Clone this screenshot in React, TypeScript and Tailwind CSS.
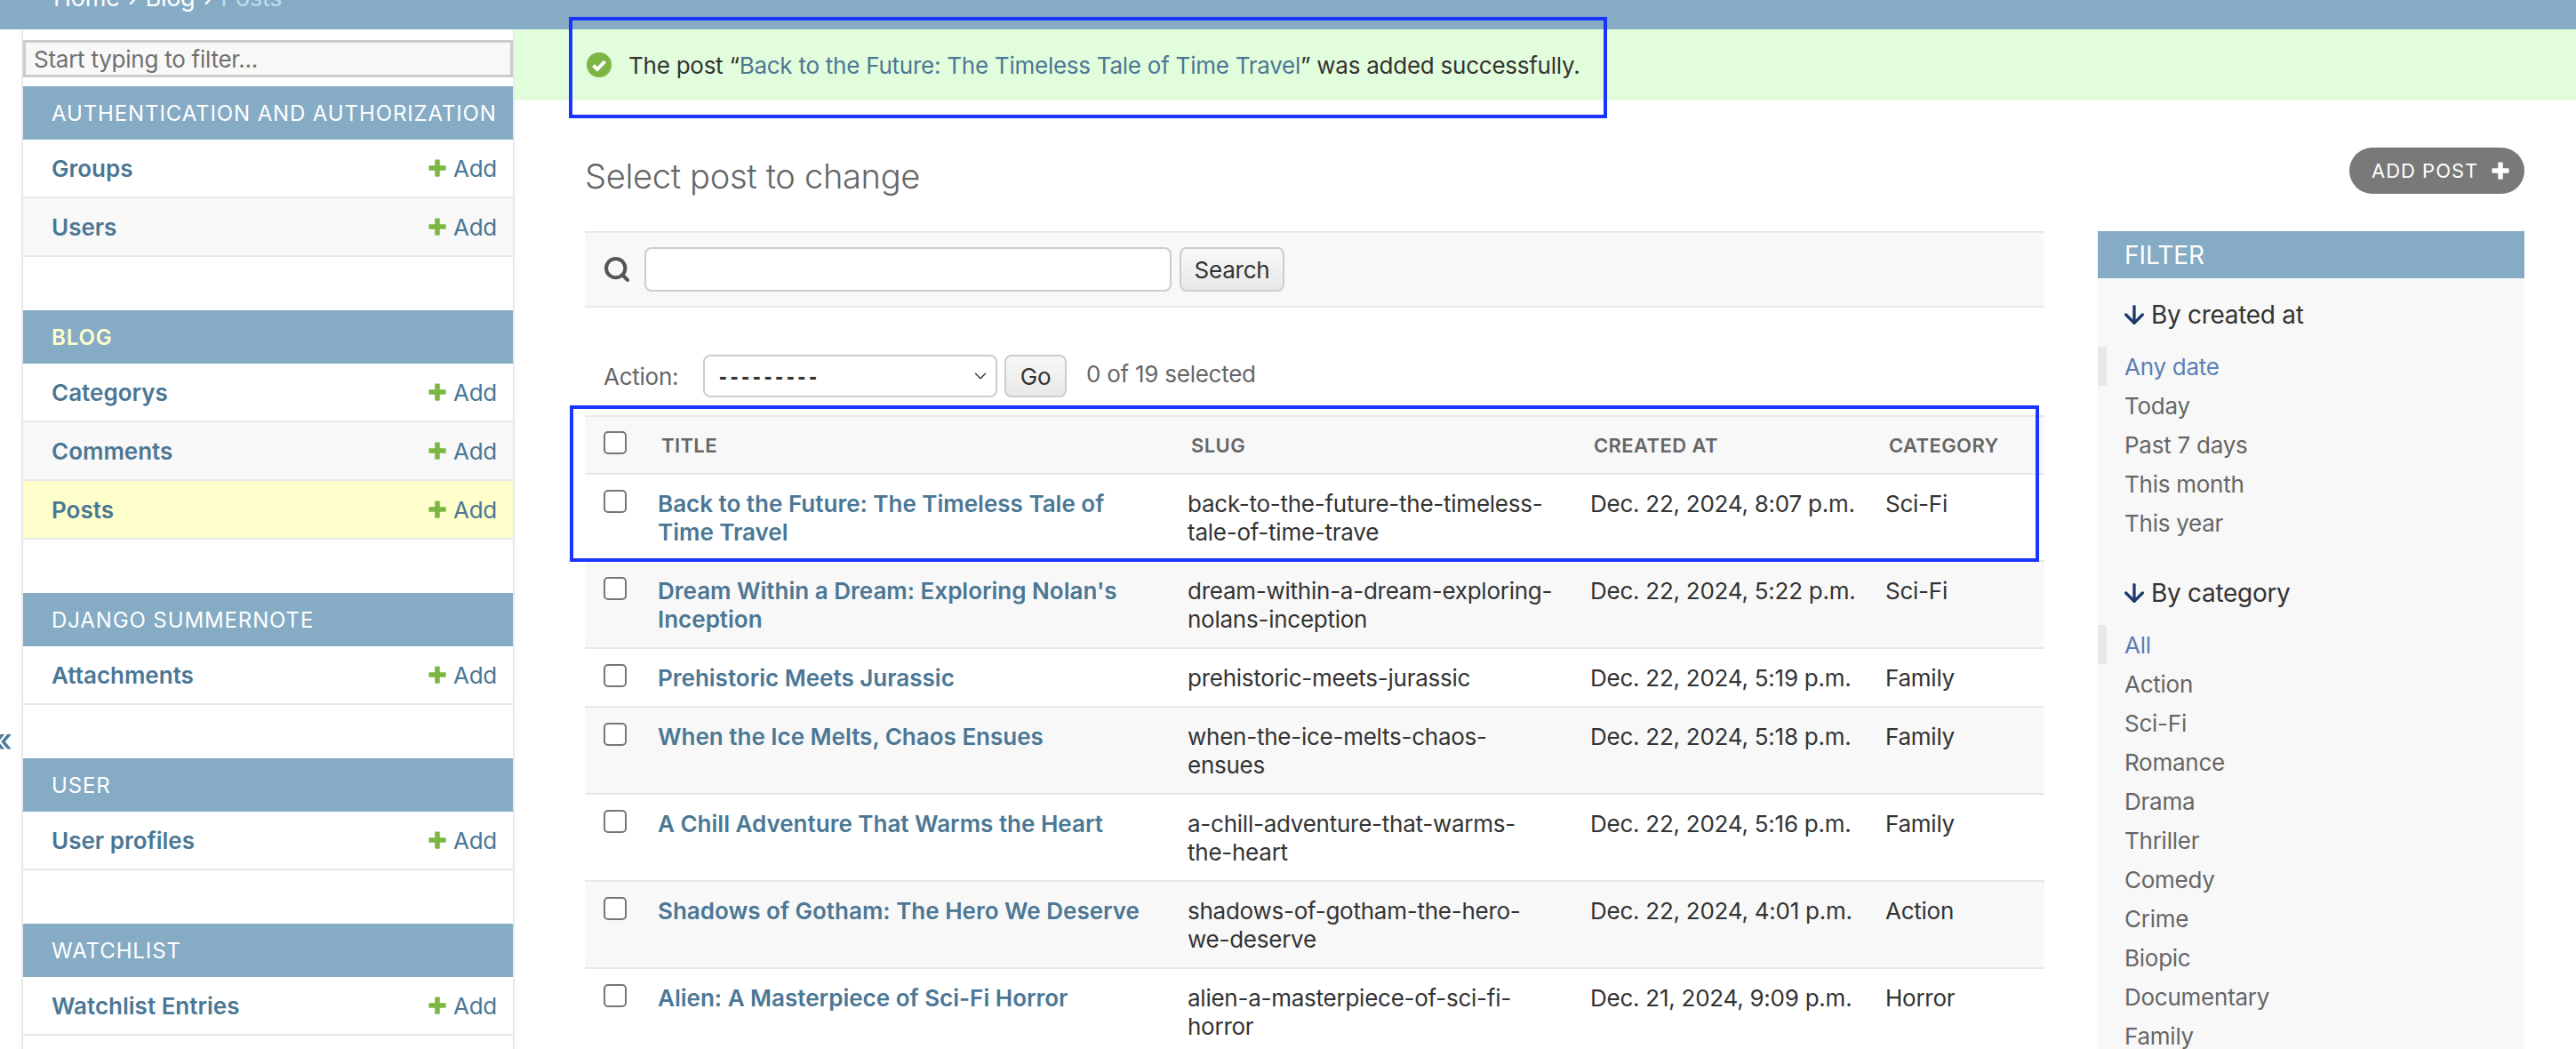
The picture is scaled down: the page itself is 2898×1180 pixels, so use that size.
import { ArrowDown, ChevronDown, Search } from "lucide-react";

const sections = [
  { name: "AUTHENTICATION AND AUTHORIZATION", items: ["Groups", "Users"] },
  { name: "BLOG", items: ["Categorys", "Comments", "Posts"], active: true },
  { name: "DJANGO SUMMERNOTE", items: ["Attachments"] },
  { name: "USER", items: ["User profiles"] },
  { name: "WATCHLIST", items: ["Watchlist Entries"] },
];

const posts = [
  ["Back to the Future: The Timeless Tale of Time Travel", "back-to-the-future-the-timeless-tale-of-time-trave", "Dec. 22, 2024, 8:07 p.m.", "Sci-Fi"],
  ["Dream Within a Dream: Exploring Nolan's Inception", "dream-within-a-dream-exploring-nolans-inception", "Dec. 22, 2024, 5:22 p.m.", "Sci-Fi"],
  ["Prehistoric Meets Jurassic", "prehistoric-meets-jurassic", "Dec. 22, 2024, 5:19 p.m.", "Family"],
  ["When the Ice Melts, Chaos Ensues", "when-the-ice-melts-chaos-ensues", "Dec. 22, 2024, 5:18 p.m.", "Family"],
  ["A Chill Adventure That Warms the Heart", "a-chill-adventure-that-warms-the-heart", "Dec. 22, 2024, 5:16 p.m.", "Family"],
  ["Shadows of Gotham: The Hero We Deserve", "shadows-of-gotham-the-hero-we-deserve", "Dec. 22, 2024, 4:01 p.m.", "Action"],
  ["Alien: A Masterpiece of Sci-Fi Horror", "alien-a-masterpiece-of-sci-fi-horror", "Dec. 21, 2024, 9:09 p.m.", "Horror"],
];

const dateFilters = ["Any date", "Today", "Past 7 days", "This month", "This year"];
const categoryFilters = ["All", "Action", "Sci-Fi", "Romance", "Drama", "Thriller", "Comedy", "Crime", "Biopic", "Documentary", "Family"];

function PlusIcon({ className }: { className: string }) {
  return (
    <svg viewBox="0 0 24 24" className={className} fill="currentColor">
      <path d="M9 2.5a1 1 0 0 1 1-1h4a1 1 0 0 1 1 1V9h6.5a1 1 0 0 1 1 1v4a1 1 0 0 1-1 1H15v6.5a1 1 0 0 1-1 1h-4a1 1 0 0 1-1-1V15H2.5a1 1 0 0 1-1-1v-4a1 1 0 0 1 1-1H9z" />
    </svg>
  );
}

function Checkbox() {
  return <input type="checkbox" className="block h-[26px] w-[26px] appearance-none rounded-[5px] border-2 border-[#767676] bg-white" />;
}

function FilterGroup({ title, items }: { title: string; items: string[] }) {
  return (
    <div>
      <div className="flex h-[44px] items-center gap-[3px] pl-[25px] text-[28px] tracking-[-0.3px] text-[#333]">
        <ArrowDown size={32} strokeWidth={2.5} className="text-[#1c3a6b]" />
        <span>{title}</span>
      </div>
      <ul className="mt-[14px]">
        {items.map((item, i) => (
          <li
            key={item}
            className={
              i === 0
                ? "flex h-[44px] items-center border-l-[10px] border-[#e8e8e8] pl-[20px] text-[#5b7fb5]"
                : "flex h-[44px] items-center pl-[30px] text-[#666]"
            }
          >
            {item}
          </li>
        ))}
      </ul>
    </div>
  );
}

export default function App() {
  return (
    <div className="relative h-[1180px] w-[2898px] overflow-hidden bg-white font-['Inter',sans-serif] text-[26px] tracking-[-0.25px] text-[#333]">
      {/* breadcrumbs, page is scrolled so they are cut by the top edge */}
      <div className="h-[33px] overflow-hidden bg-[#85abc5] pl-[60px] text-[#fff]">
        <div className="-mt-[18px] text-[27px] leading-[32px] [word-spacing:2px]">
          Home › Blog › <span className="text-[#c4dce8]">Posts</span>
        </div>
      </div>

      <div className="flex">
        {/* sidebar */}
        <aside className="h-[1147px] w-[579px] shrink-0 pl-[24px]">
          <div className="h-full border-x-2 border-[#e8e8e8]">
            <div className="pt-[12px]">
              <div className="flex h-[42px] items-center border-[3px] border-[#cccccc] bg-[#f8f8f8] pl-[9px] text-[#707070]">
                Start typing to filter...
              </div>
            </div>
            <div className="mt-[10px]">
              {sections.map((section) => (
                <section key={section.name} className="mb-[60px]">
                  <div
                    className={
                      section.active
                        ? "flex h-[60px] items-center bg-[#85abc5] pl-[32px] pt-[2px] text-[24px] font-semibold tracking-[0.88px] text-[#ffffcc]"
                        : "flex h-[60px] items-center bg-[#85abc5] pl-[32px] pt-[2px] text-[24px] tracking-[0.88px] text-white"
                    }
                  >
                    {section.name}
                  </div>
                  {section.items.map((item, i) => (
                    <div
                      key={item}
                      className={`flex h-[66px] items-center justify-between border-b-2 border-[#e8e8e8] pl-[32px] pr-[18px] ${
                        item === "Posts" ? "bg-[#ffffcc]" : i % 2 === 1 ? "bg-[#f8f8f8]" : "bg-white"
                      }`}
                    >
                      <span className="font-semibold tracking-normal text-[#4b7795]">{item}</span>
                      <span className="flex items-center gap-[7px] text-[#4b7795]">
                        <PlusIcon className="h-[22px] w-[22px] text-[#7ab640]" />
                        Add
                      </span>
                    </div>
                  ))}
                </section>
              ))}
            </div>
          </div>
        </aside>

        {/* content */}
        <main className="min-w-0 flex-1">
          <div className="flex h-[80px] items-center gap-[19px] bg-[#e2fddc] pl-[81px] text-[#333]">
            <svg viewBox="0 0 28 28" className="h-[28px] w-[28px]">
              <circle cx="14" cy="14" r="14" fill="#7db544" />
              <path d="M7.5 14.5l4.5 4.5 8.5-9" fill="none" stroke="#fff" strokeWidth="4" />
            </svg>
            <span>
              The post “<span className="text-[#4b7795]">Back to the Future: The Timeless Tale of Time Travel</span>” was added successfully.
            </span>
          </div>

          <div className="pl-[79px] pr-[58px]">
            <div className="flex h-[147px] items-start justify-between pt-[53px]">
              <h1 className="mt-[6px] text-[38px] font-light leading-[52px] tracking-[-0.3px] text-[#666]">Select post to change</h1>
              <div className="flex h-[52px] w-[197px] items-center gap-[14px] rounded-full bg-[#797979] pl-[25px] text-[22px] tracking-[1px] text-white">
                ADD POST
                <PlusIcon className="h-[22px] w-[22px]" />
              </div>
            </div>

            <div className="flex gap-[60px]">
              <div className="w-[1642px] shrink-0">
                {/* search */}
                <div className="flex h-[86px] items-center border-y-2 border-[#e8e8e8] bg-[#f8f8f8] pl-[20px]">
                  <Search size={32} strokeWidth={3} className="text-[#555]" />
                  <div className="ml-[15px] h-[50px] w-[593px] rounded-[8px] border-2 border-[#ccc] bg-white" />
                  <div className="ml-[9px] flex h-[50px] w-[118px] items-center justify-center rounded-[8px] border-2 border-[#ccc] bg-gradient-to-b from-[#f8f8f8] to-[#e8e8e8] text-[#333]">
                    Search
                  </div>
                </div>

                {/* actions */}
                <div className="mt-[53px] flex h-[48px] items-center">
                  <span className="ml-[21px] w-[112px] text-[#666]">Action:</span>
                  <div className="flex h-[48px] w-[331px] items-center justify-between rounded-[8px] border-2 border-[#ccc] bg-white pl-[16px] pr-[6px] font-['Liberation_Sans',sans-serif] font-bold tracking-[4px] text-[#333]">
                    ---------
                    <ChevronDown size={22} strokeWidth={1.5} className="text-[#333]" />
                  </div>
                  <div className="ml-[8px] flex h-[48px] w-[70px] items-center justify-center rounded-[8px] border-2 border-[#ccc] bg-gradient-to-b from-[#f8f8f8] to-[#e8e8e8]">
                    Go
                  </div>
                  <span className="-mt-[6px] ml-[22px] text-[#666]">0 of 19 selected</span>
                </div>

                {/* change list */}
                <table className="mt-[20px] w-[1642px] table-fixed border-separate border-spacing-0 leading-[32px]">
                  <colgroup>
                    <col className="w-[67px]" />
                    <col className="w-[596px]" />
                    <col className="w-[453px]" />
                    <col className="w-[332px]" />
                    <col className="w-[194px]" />
                  </colgroup>
                  <thead>
                    <tr className="bg-[#f8f8f8] text-left text-[22px] font-semibold tracking-[0.4px] text-[#666]">
                      <th className="h-[67px] border-y-2 border-[#e8e8e8] pl-[21px] align-top pt-[16px]">
                        <Checkbox />
                      </th>
                      <th className="border-y-2 border-[#e8e8e8] pl-[19px] font-semibold">TITLE</th>
                      <th className="border-y-2 border-[#e8e8e8] pl-[19px] font-semibold">SLUG</th>
                      <th className="border-y-2 border-[#e8e8e8] pl-[19px] font-semibold">CREATED AT</th>
                      <th className="border-y-2 border-[#e8e8e8] pl-[19px] font-semibold">CATEGORY</th>
                    </tr>
                  </thead>
                  <tbody>
                    {posts.map((post, i) => (
                      <tr key={post[1]} className={i % 2 === 1 ? "bg-[#f8f8f8]" : "bg-white"}>
                        <td className="border-b-2 border-[#e8e8e8] pb-[15px] pl-[21px] pt-[17px] align-top">
                          <Checkbox />
                        </td>
                        <td className="border-b-2 border-[#e8e8e8] pb-[15px] pl-[15px] pr-[16px] pt-[17px] align-top font-semibold tracking-normal text-[#4b7795]">
                          {post[0]}
                        </td>
                        <td className="break-words border-b-2 border-[#e8e8e8] pb-[15px] pl-[15px] pr-[25px] pt-[17px] align-top">
                          {post[1]}
                        </td>
                        <td className="border-b-2 border-[#e8e8e8] pb-[15px] pl-[15px] pt-[17px] align-top">{post[2]}</td>
                        <td className="border-b-2 border-[#e8e8e8] pb-[15px] pl-[15px] pt-[17px] align-top">{post[3]}</td>
                      </tr>
                    ))}
                  </tbody>
                </table>
              </div>

              {/* filter */}
              <div className="h-[920px] w-[480px] shrink-0 bg-[#f8f8f8]">
                <div className="flex h-[53px] items-center bg-[#85abc5] pl-[30px] text-[28px] tracking-normal text-white">FILTER</div>
                <div className="mt-[19px]">
                  <FilterGroup title="By created at" items={dateFilters} />
                </div>
                <div className="mt-[35px]">
                  <FilterGroup title="By category" items={categoryFilters} />
                </div>
              </div>
            </div>
          </div>
        </main>
      </div>

      {/* collapsed sidebar toggle, cut by the left edge */}
      <div className="absolute left-[-8px] top-[805px] text-[36px] font-medium text-[#4b7795]">«</div>

      {/* blue annotation boxes */}
      <div className="absolute left-[640px] top-[19px] h-[114px] w-[1168px] border-4 border-[#1a35ff]" />
      <div className="absolute left-[641px] top-[456px] h-[176px] w-[1653px] border-4 border-[#1a35ff]" />
    </div>
  );
}
